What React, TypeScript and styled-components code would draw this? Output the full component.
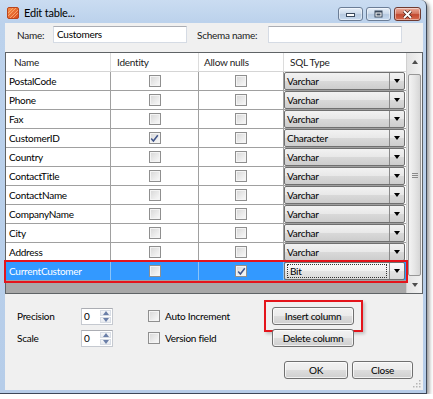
import React from "react";
import styled, { createGlobalStyle, css } from "styled-components";

const GlobalStyle = createGlobalStyle`
  html, body { margin: 0; padding: 0; background: #ffffff; }
  body { font-family: Lato, "Liberation Sans", Arial, sans-serif; font-size: 10px; letter-spacing: -0.25px; color: #000; }
  * { box-sizing: border-box; }
`;

const Window = styled.div`
  width: 427px;
  height: 394px;
  border-right: 1px solid #3d4859;
  border-bottom: 1px solid #3d4859;
  border-radius: 0 6px 0 0;
  background: linear-gradient(180deg, #cadcf1 0px, #bcd2ec 22px, #b6cde9 100%);
  box-shadow: 2px 2px 4px rgba(0, 0, 0, 0.45);
  display: flex;
  flex-direction: column;
`;

const TitleBar = styled.div`
  height: 23px;
  flex: none;
  display: flex;
  align-items: flex-start;
  padding: 7px 5px 0 7px;
`;

const TitleText = styled.div`
  margin-left: 5px;
  margin-top: -1px;
  font-size: 11px;
  letter-spacing: -0.2px;
  line-height: 14px;
  color: #000;
  flex: 1;
`;

const CaptionButtons = styled.div`
  display: flex;
  gap: 3px;
`;

const CaptionButton = styled.div<{ $close?: boolean }>`
  width: ${(p) => (p.$close ? 27 : 25)}px;
  height: 14px;
  border-radius: 3px;
  border: 1px solid ${(p) => (p.$close ? "#6e3a31" : "#6b7d96")};
  background: ${(p) =>
    p.$close
      ? "linear-gradient(180deg, #e9a99a 0%, #d67a63 45%, #c24a31 55%, #d8694d 100%)"
      : "linear-gradient(180deg, #e6eef8 0%, #cddbec 45%, #b6c9e0 55%, #c9dbf0 100%)"};
  display: flex;
  align-items: center;
  justify-content: center;
  box-shadow: inset 0 0 0 1px rgba(255, 255, 255, 0.45);
`;

const Client = styled.div`
  flex: 1;
  margin: 0 3px 3px 5px;
  background: #f0f0f0;
  display: flex;
  flex-direction: column;
  position: relative;
`;

const TopRow = styled.div`
  display: flex;
  align-items: center;
  padding: 3px 0 0 12px;
  height: 20px;
`;

const FieldLabel = styled.div<{ $w: number }>`
  width: ${(p) => p.$w}px;
  flex: none;
  color: #1a1a1a;
`;

const TextInput = styled.div`
  width: 134px;
  height: 17px;
  border: 1px solid #d5dbe4;
  border-top-color: #abadb3;
  background: #fff;
  padding: 0 3px;
  line-height: 15px;
  margin-right: 10px;
`;

const GridBox = styled.div`
  margin-top: 9px;
  height: 242px;
  border: 1px solid #5f6366;
  background: #a9a9a9;
  display: flex;
`;

const DataArea = styled.div`
  flex: 1;
  display: flex;
  flex-direction: column;
  background: #a8a8a8;
`;

const GridRow = styled.div<{ $selected?: boolean; $header?: boolean }>`
  display: grid;
  grid-template-columns: 105px 88px 85px 1fr;
  height: 19px;
  flex: none;
  border-bottom: 1px solid ${(p) => (p.$header ? "#d5d5d5" : "#a0a0a0")};
  background: ${(p) => (p.$selected ? "#3399ff" : "#ffffff")};
  color: ${(p) => (p.$selected ? "#ffffff" : "#000000")};
  ${(p) =>
    p.$selected &&
    css`
      outline: 2px solid #e4141b;
      outline-offset: 0px;
      position: relative;
      z-index: 1;
    `}
`;

const Cell = styled.div<{ $center?: boolean; $header?: boolean; $last?: boolean; $pad?: number; $sel?: boolean }>`
  display: flex;
  align-items: center;
  justify-content: ${(p) => (p.$center ? "center" : "flex-start")};
  padding-left: ${(p) => (p.$pad !== undefined ? p.$pad : 3)}px;
  border-right: ${(p) =>
    p.$last ? "none" : `1px solid ${p.$header ? "#dcdcdc" : p.$sel ? "#8cc4f8" : "#a0a0a0"}`};
  white-space: nowrap;
  overflow: hidden;
  color: ${(p) => (p.$header ? "#1b1b1b" : "inherit")};
`;

const ComboCell = styled.div`
  display: flex;
  align-items: center;
  padding: 0 1px 0 0;
`;

const Combo = styled.div<{ $focused?: boolean }>`
  flex: 1;
  height: 18px;
  display: flex;
  border: 1px solid #707070;
  border-radius: 2px;
  background: ${(p) =>
    p.$focused
      ? "linear-gradient(180deg, #fafafa 0%, #f0f0f0 50%, #e4e4e4 51%, #dadada 100%)"
      : "linear-gradient(180deg, #f2f2f2 0%, #e8e8e8 50%, #d9d9d9 51%, #cdcdcd 100%)"};
  color: #000;
`;

const ComboText = styled.div<{ $focused?: boolean }>`
  flex: 1;
  line-height: ${(p) => (p.$focused ? 12 : 16)}px;
  padding-left: 2px;
  ${(p) =>
    p.$focused &&
    css`
      margin: 1px 2px 1px 2px;
      border: 1px dotted #333;
    `}
`;

const ComboButton = styled.div`
  width: 15px;
  border-left: 1px solid #8a8a8a;
  display: flex;
  align-items: center;
  justify-content: center;
`;

const Arrow = styled.div<{ $up?: boolean; $color?: string }>`
  width: 0;
  height: 0;
  border-left: 3.5px solid transparent;
  border-right: 3.5px solid transparent;
  ${(p) =>
    p.$up
      ? css`border-bottom: 4px solid ${p.$color || "#000"};`
      : css`border-top: 4px solid ${p.$color || "#000"};`}
`;

const Box = styled.div<{ $checked?: boolean }>`
  width: 12px;
  height: 12px;
  border: 1px solid #8f8f8f;
  background: linear-gradient(135deg, #d6d6d6 0%, #ececec 60%, #fafafa 100%);
  box-shadow: inset 0 0 0 1px #f4f4f4;
  display: flex;
  align-items: center;
  justify-content: center;
`;

const Scrollbar = styled.div`
  width: 16px;
  flex: none;
  display: flex;
  flex-direction: column;
  background: linear-gradient(90deg, #e3e3e3, #f2f2f2);
  border-left: 1px solid #d0d0d0;
`;

const ScrollArrowBox = styled.div`
  height: 17px;
  flex: none;
  display: flex;
  align-items: center;
  justify-content: center;
`;

const Thumb = styled.div`
  flex: 1;
  margin: 4px 1px 0 1px;
  border: 1px solid #979797;
  border-radius: 2px;
  background: linear-gradient(90deg, #f3f3f3 0%, #e6e6e6 50%, #d6d6d6 100%);
  display: flex;
  align-items: center;
  justify-content: center;
`;

const Grip = styled.div`
  width: 6px;
  height: 5px;
  border-top: 1px solid #8a8a8a;
  border-bottom: 1px solid #8a8a8a;
  position: relative;
  &::after {
    content: "";
    position: absolute;
    left: 0;
    right: 0;
    top: 1px;
    border-top: 1px solid #8a8a8a;
  }
`;

const Options = styled.div`
  display: grid;
  grid-template-columns: 64px 67px 124px 82px;
  grid-auto-rows: 18px;
  row-gap: 4px;
  align-items: center;
  padding-left: 12px;
  margin-top: 13px;
`;

const Spinner = styled.div`
  width: 32px;
  height: 17px;
  border: 1px solid #c5c9d0;
  border-top-color: #abadb3;
  background: #fff;
  display: flex;
`;

const SpinnerValue = styled.div`
  flex: 1;
  padding-left: 2px;
  line-height: 14px;
`;

const SpinnerButtons = styled.div`
  width: 12px;
  display: flex;
  flex-direction: column;
  gap: 1px;
  padding: 1px 1px 1px 0;
`;

const SpinnerButton = styled.div`
  flex: 1;
  border: 1px solid #d8dde5;
  background: linear-gradient(180deg, #f6f7f9, #e7eaef);
  display: flex;
  align-items: center;
  justify-content: center;
`;

const CheckOption = styled.div`
  display: flex;
  align-items: center;
  gap: 5px;
`;

const Button = styled.div<{ $w?: number; $marked?: boolean }>`
  width: ${(p) => p.$w || 82}px;
  height: 18px;
  border: 1px solid #707070;
  border-radius: 3px;
  background: linear-gradient(180deg, #f2f2f2 0%, #ebebeb 50%, #dddddd 51%, #cfcfcf 100%);
  box-shadow: inset 0 0 0 1px rgba(255, 255, 255, 0.7);
  display: flex;
  align-items: center;
  justify-content: center;
  position: relative;
  ${(p) =>
    p.$marked &&
    css`
      &::after {
        content: "";
        position: absolute;
        top: -8px;
        bottom: -8px;
        left: -9px;
        right: -10px;
        border: 2px solid #e4141b;
        box-shadow: 2px 2px 3px rgba(0, 0, 0, 0.2);
      }
    `}
`;

const Footer = styled.div`
  display: flex;
  justify-content: flex-end;
  gap: 4px;
  padding-right: 10px;
  margin-top: 14px;
`;

const ResizeGrip = styled.svg`
  position: absolute;
  right: 2px;
  bottom: 2px;
`;

type RowData = { name: string; identity?: boolean; nulls?: boolean; type: string; selected?: boolean };

const rows: RowData[] = [
  { name: "PostalCode", type: "Varchar" },
  { name: "Phone", type: "Varchar" },
  { name: "Fax", type: "Varchar" },
  { name: "CustomerID", identity: true, type: "Character" },
  { name: "Country", type: "Varchar" },
  { name: "ContactTitle", type: "Varchar" },
  { name: "ContactName", type: "Varchar" },
  { name: "CompanyName", type: "Varchar" },
  { name: "City", type: "Varchar" },
  { name: "Address", type: "Varchar" },
  { name: "CurrentCustomer", nulls: true, type: "Bit", selected: true },
];

const CheckBox = ({ checked }: { checked?: boolean }) => (
  <Box $checked={checked}>
    {checked && (
      <svg width="9" height="9" viewBox="0 0 9 9">
        <path d="M1.2 4.6 L3.4 7 L7.8 1.2" fill="none" stroke="#3f5489" strokeWidth="1.5" />
      </svg>
    )}
  </Box>
);

const AppIcon = () => (
  <svg width="12" height="12" viewBox="0 0 12 12">
    <defs>
      <linearGradient id="ig" x1="0" y1="0" x2="1" y2="1">
        <stop offset="0" stopColor="#f7924a" />
        <stop offset="1" stopColor="#d9481b" />
      </linearGradient>
    </defs>
    <rect x="0.5" y="0.5" width="11" height="11" rx="1.5" fill="url(#ig)" stroke="#b8451e" />
    <path d="M1 6 L6 1 M1 9 L9 1 M3 11 L11 3 M6 11 L11 6" stroke="#fbb07a" strokeWidth="0.8" />
  </svg>
);

const SpinBox = () => (
  <Spinner>
    <SpinnerValue>0</SpinnerValue>
    <SpinnerButtons>
      <SpinnerButton>
        <Arrow $up $color="#6b7fa8" />
      </SpinnerButton>
      <SpinnerButton>
        <Arrow $color="#6b7fa8" />
      </SpinnerButton>
    </SpinnerButtons>
  </Spinner>
);

export default function App() {
  return (
    <>
      <GlobalStyle />
      <Window>
        <TitleBar>
          <AppIcon />
          <TitleText>Edit table...</TitleText>
          <CaptionButtons>
            <CaptionButton>
              <svg width="11" height="6" viewBox="0 0 11 6">
                <rect x="1.5" y="2.5" width="8" height="3" fill="#fff" stroke="#3b4a5e" />
              </svg>
            </CaptionButton>
            <CaptionButton>
              <svg width="11" height="8" viewBox="0 0 11 8">
                <rect x="1.5" y="0.5" width="8" height="7" fill="#3b4a5e" />
                <rect x="2.5" y="2.5" width="6" height="4" fill="#fff" />
                <rect x="3.5" y="3.5" width="4" height="2" fill="#3b4a5e" />
              </svg>
            </CaptionButton>
            <CaptionButton $close>
              <svg width="11" height="9" viewBox="0 0 11 9">
                <path d="M2 1 L9 8 M9 1 L2 8" stroke="#4a1f17" strokeWidth="3.2" />
                <path d="M2 1 L9 8 M9 1 L2 8" stroke="#fff" strokeWidth="1.8" />
              </svg>
            </CaptionButton>
          </CaptionButtons>
        </TitleBar>
        <Client>
          <TopRow>
            <FieldLabel $w={36}>Name:</FieldLabel>
            <TextInput>Customers</TextInput>
            <FieldLabel $w={71}>Schema name:</FieldLabel>
            <TextInput />
          </TopRow>
          <GridBox>
            <DataArea>
              <GridRow $header>
                <Cell $header $pad={8}>Name</Cell>
                <Cell $header $pad={6}>Identity</Cell>
                <Cell $header $pad={5}>Allow nulls</Cell>
                <Cell $header $pad={6} $last>SQL Type</Cell>
              </GridRow>
              {rows.map((r) => (
                <GridRow key={r.name} $selected={r.selected}>
                  <Cell $sel={r.selected}>{r.name}</Cell>
                  <Cell $sel={r.selected} $center $pad={0}>
                    <CheckBox checked={r.identity} />
                  </Cell>
                  <Cell $sel={r.selected} $center $pad={0}>
                    <CheckBox checked={r.nulls} />
                  </Cell>
                  <ComboCell>
                    <Combo $focused={r.selected}>
                      <ComboText $focused={r.selected}>{r.type}</ComboText>
                      <ComboButton>
                        <Arrow />
                      </ComboButton>
                    </Combo>
                  </ComboCell>
                </GridRow>
              ))}
            </DataArea>
            <Scrollbar>
              <ScrollArrowBox>
                <Arrow $up $color="#4d4d4d" />
              </ScrollArrowBox>
              <Thumb>
                <Grip />
              </Thumb>
              <ScrollArrowBox>
                <Arrow $color="#4d4d4d" />
              </ScrollArrowBox>
            </Scrollbar>
          </GridBox>
          <Options>
            <div>Precision</div>
            <SpinBox />
            <CheckOption>
              <CheckBox />
              <span>Auto Increment</span>
            </CheckOption>
            <Button $marked>Insert column</Button>
            <div>Scale</div>
            <SpinBox />
            <CheckOption>
              <CheckBox />
              <span>Version field</span>
            </CheckOption>
            <Button>Delete column</Button>
          </Options>
          <Footer>
            <Button $w={64}>OK</Button>
            <Button $w={61}>Close</Button>
          </Footer>
          <ResizeGrip width="10" height="10" viewBox="0 0 10 10">
            {[
              [8, 2],
              [8, 5],
              [5, 5],
              [8, 8],
              [5, 8],
              [2, 8],
            ].map(([x, y]) => (
              <rect key={`${x}-${y}`} x={x} y={y} width="1.5" height="1.5" fill="#b5b5b5" />
            ))}
          </ResizeGrip>
        </Client>
      </Window>
    </>
  );
}
